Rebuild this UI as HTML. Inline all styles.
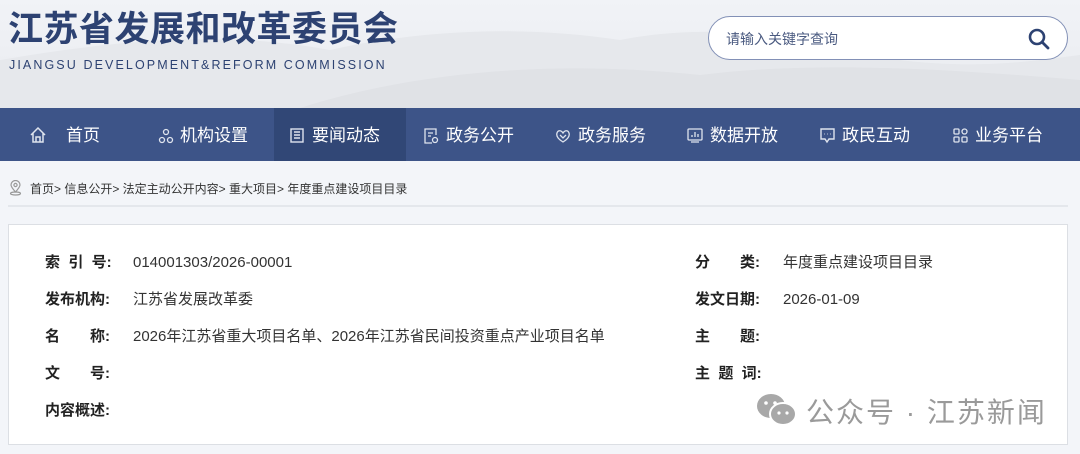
<!DOCTYPE html>
<html><head><meta charset="utf-8"><style>
*{margin:0;padding:0;box-sizing:border-box}
body{width:1080px;height:454px;overflow:hidden;background:#f3f5f9;font-family:"Liberation Sans","Noto Sans CJK SC",sans-serif;position:relative}
.hdr{position:absolute;left:0;top:0;width:1080px;height:108px;background:linear-gradient(180deg,#f1f3f7 0%,#eceef2 60%,#e4e6ea 100%);overflow:hidden}
.t1{position:absolute;left:8px;top:1px;font-size:35px;font-weight:bold;color:#2d4272;letter-spacing:0.5px;white-space:nowrap}
.t2{position:absolute;left:9px;top:58px;font-size:12.5px;color:#2d4272;letter-spacing:2.1px;white-space:nowrap}
.srch{position:absolute;left:708px;top:16px;width:360px;height:44px;border:1px solid #8290b6;border-radius:22px;background:#fff}
.srch span{position:absolute;left:17px;top:12px;font-size:14px;color:#4a5a80}
.nav{position:absolute;left:0;top:108px;width:1080px;height:53px;background:#3d5488}
.act{position:absolute;left:274px;top:0;width:132px;height:53px;background:#314776}
.ni{position:absolute;top:17px;font-size:17px;color:#fff;white-space:nowrap;line-height:22px}
.ic{position:absolute;top:20px}
.bc{position:absolute;left:30px;top:180px;font-size:12px;color:#333;white-space:nowrap}
.line{position:absolute;left:8px;top:205px;width:1060px;height:2px;background:#e4e7ec}
.box{position:absolute;left:8px;top:224px;width:1060px;height:221px;background:#fff;border:1px solid #dcdfe4}
.l{position:absolute;font-size:15px;font-weight:bold;color:#222;white-space:nowrap}
.v{position:absolute;font-size:15px;color:#333;white-space:nowrap}
.wm{position:absolute;left:806px;top:391px;font-size:28px;color:#9a9a9a;white-space:nowrap;letter-spacing:2px}
</style></head><body>
<div class="hdr">
<svg width="1080" height="108" style="position:absolute;left:0;top:0"><path d="M0 60 C120 40 220 30 330 50 C420 30 520 25 620 40 C720 20 820 40 900 60 C980 70 1040 60 1080 55 L1080 108 L0 108Z" fill="#e6e8ec"/><path d="M300 108 C420 70 560 60 700 75 C820 60 960 70 1080 80 L1080 108Z" fill="#e0e2e6"/></svg>
<div class="t1">江苏省发展和改革委员会</div>
<div class="t2">JIANGSU DEVELOPMENT&amp;REFORM COMMISSION</div>
<div class="srch"><span>请输入关键字查询</span>
<svg style="position:absolute;left:319px;top:11px" width="22" height="22" viewBox="0 0 22 22"><circle cx="9" cy="9" r="7" fill="none" stroke="#2d4272" stroke-width="2.6"/><path d="M14 14 L20 20" stroke="#2d4272" stroke-width="2.8" stroke-linecap="round"/></svg></div>
</div>
<div class="nav">
<div class="act"></div>
<svg class="ic" style="left:29px;top:18px" width="18" height="18" viewBox="0 0 18 18" fill="none" stroke="#dfe4ee" stroke-width="1.5"><path d="M2 9 L9 2 L16 9 M4 7 V16 H14 V7 M7 16 V11 H11 V16"/></svg>
<div class="ni" style="left:66px">首页</div>
<svg class="ic" style="left:158px" width="16" height="16" viewBox="0 0 16 16" fill="none" stroke="#dfe4ee" stroke-width="1.3"><circle cx="8" cy="4" r="2.5"/><circle cx="4" cy="12" r="2.5"/><circle cx="12" cy="12" r="2.5"/></svg>
<div class="ni" style="left:180px">机构设置</div>
<svg class="ic" style="left:290px" width="14" height="15" viewBox="0 0 14 15" fill="none" stroke="#dfe4ee" stroke-width="1.4"><rect x="1" y="1" width="12" height="13"/><path d="M4 4H10M4 7H10M4 10H10"/></svg>
<div class="ni" style="left:312px">要闻动态</div>
<svg class="ic" style="left:424px" width="15" height="16" viewBox="0 0 15 16" fill="none" stroke="#dfe4ee" stroke-width="1.3"><path d="M8 15H1V1H12V7"/><path d="M4 5H9M4 8H7"/><circle cx="11" cy="12" r="2.5"/></svg>
<div class="ni" style="left:446px">政务公开</div>
<svg class="ic" style="left:555px" width="16" height="16" viewBox="0 0 16 16" fill="none" stroke="#dfe4ee" stroke-width="1.3"><path d="M8 14 C3 11 1 8 2 5 C3 2 6 2 8 5 C10 2 13 2 14 5 C15 8 13 11 8 14Z"/><path d="M5 7 L8 10 L11 7"/></svg>
<div class="ni" style="left:578px">政务服务</div>
<svg class="ic" style="left:687px" width="16" height="15" viewBox="0 0 16 15" fill="none" stroke="#dfe4ee" stroke-width="1.3"><rect x="1" y="1" width="14" height="11" rx="1"/><path d="M4 14H12M5 9V7M8 9V4M11 9V6"/></svg>
<div class="ni" style="left:710px">数据开放</div>
<svg class="ic" style="left:820px" width="15" height="16" viewBox="0 0 15 16" fill="none" stroke="#dfe4ee" stroke-width="1.4"><path d="M1 1H14V11H9L7 14L5 11H1Z"/><path d="M4.5 6H5M7.3 6H7.8M10 6H10.5"/></svg>
<div class="ni" style="left:842px">政民互动</div>
<svg class="ic" style="left:953px" width="15" height="15" viewBox="0 0 15 15" fill="none" stroke="#dfe4ee" stroke-width="1.3"><rect x="1" y="1" width="5" height="5" rx="1"/><rect x="9" y="1" width="5" height="5" rx="2.5"/><rect x="1" y="9" width="5" height="5" rx="1"/><rect x="9" y="9" width="5" height="5" rx="1"/></svg>
<div class="ni" style="left:975px">业务平台</div>
</div>
<svg style="position:absolute;left:9px;top:180px" width="13" height="16" viewBox="0 0 13 16" fill="none" stroke="#999" stroke-width="1.2"><path d="M6.5 12 C3 8 2 6 2 5 A4.5 4.5 0 0 1 11 5 C11 6 10 8 6.5 12Z"/><circle cx="6.5" cy="5" r="1.6"/><ellipse cx="6.5" cy="13.5" rx="5" ry="1.5"/></svg>
<div class="bc">首页&gt; 信息公开&gt; 法定主动公开内容&gt; 重大项目&gt; 年度重点建设项目目录</div>
<div class="line"></div>
<div class="box"></div>
<div class="l" style="left:45px;top:251px">索&nbsp;&nbsp;引&nbsp;&nbsp;号:</div><div class="v" style="left:133px;top:254px">014001303/2026-00001</div>
<div class="l" style="left:45px;top:288px">发布机构:</div><div class="v" style="left:133px;top:288px">江苏省发展改革委</div>
<div class="l" style="left:45px;top:325px">名<span style="display:inline-block;width:30px"></span>称:</div><div class="v" style="left:133px;top:325px">2026年江苏省重大项目名单、2026年江苏省民间投资重点产业项目名单</div>
<div class="l" style="left:45px;top:362px">文<span style="display:inline-block;width:30px"></span>号:</div>
<div class="l" style="left:45px;top:399px">内容概述:</div>
<div class="l" style="left:695px;top:251px">分<span style="display:inline-block;width:30px"></span>类:</div><div class="v" style="left:783px;top:251px">年度重点建设项目目录</div>
<div class="l" style="left:695px;top:288px">发文日期:</div><div class="v" style="left:783px;top:291px">2026-01-09</div>
<div class="l" style="left:695px;top:325px">主<span style="display:inline-block;width:30px"></span>题:</div>
<div class="l" style="left:695px;top:362px">主&nbsp;&nbsp;题&nbsp;&nbsp;词:</div>
<svg style="position:absolute;left:756px;top:393px" width="42" height="34" viewBox="0 0 42 34"><ellipse cx="15" cy="13" rx="14" ry="12" fill="#a8a8a8"/><ellipse cx="27" cy="21" rx="13" ry="11" fill="#a8a8a8" stroke="#fff" stroke-width="2"/><circle cx="10" cy="10" r="1.8" fill="#fff"/><circle cx="19" cy="10" r="1.8" fill="#fff"/><circle cx="23" cy="20" r="1.6" fill="#fff"/><circle cx="31" cy="20" r="1.6" fill="#fff"/></svg>
<div class="wm">公众号 · 江苏新闻</div>
</body></html>
